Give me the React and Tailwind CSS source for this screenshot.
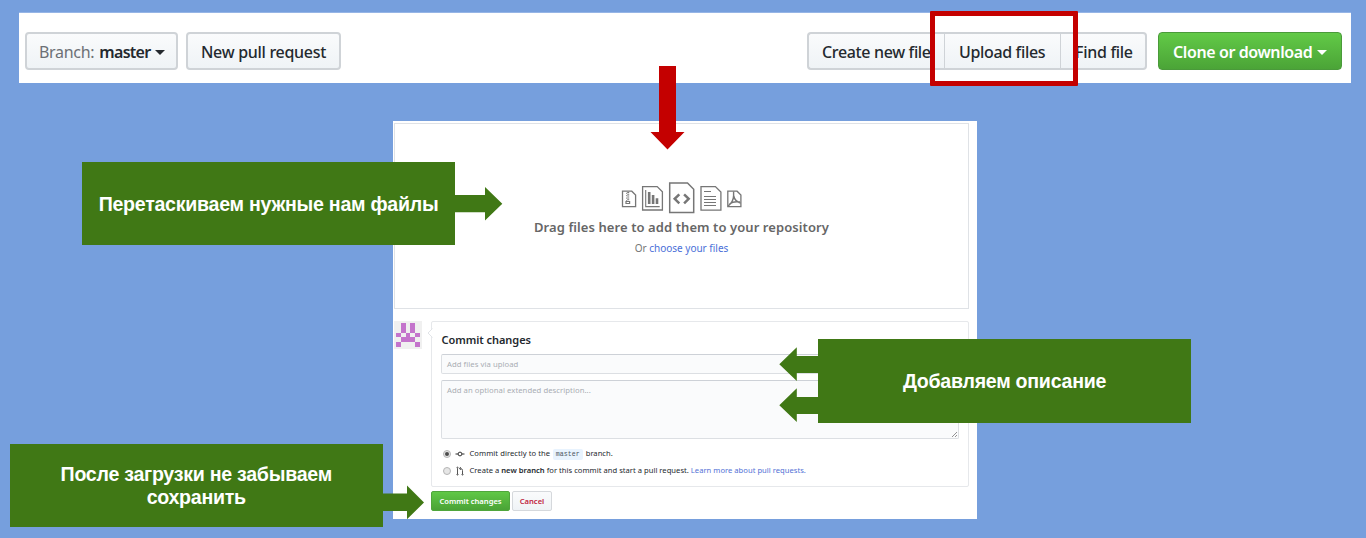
import React from "react";

const grayBtn =
  "flex items-center border border-[#cfd3d7] bg-gradient-to-b from-[#fafbfc] to-[#eff3f6] whitespace-nowrap";

function Toolbar() {
  return (
    <div className="ml-[19px] flex h-[70px] w-[1332px] shrink-0 items-center bg-white pt-[6px] pb-0 pl-[6px] pr-[9px] text-[16px] font-medium text-[#24292e] shadow-[0_-0.5px_0_#b5ccf0]">
      <div className={`${grayBtn} h-[38px] w-[153px] rounded-[4px] border-2 pt-[2px] pl-[12px]`}>
        <span className="font-normal tracking-[-0.3px] text-[#6c7075]">Branch:</span>
        <span className="ml-[5px] tracking-[-0.7px] font-semibold">master</span>
        <span className="ml-[4px] border-x-[5px] border-t-[5px] border-x-transparent border-t-[#24292e]" />
      </div>
      <div className={`${grayBtn} ml-[8px] h-[38px] w-[155px] rounded-[4px] border-2 pt-[2px] pl-[13px] tracking-[-0.3px]`}>
        New pull request
      </div>
      <div className="ml-auto flex">
        <div className={`${grayBtn} h-[38px] w-[137px] rounded-l-[4px] border-2 border-r-0 pt-[2px] pl-[13px] tracking-[-0.35px]`}>
          Create new file
        </div>
        <div className={`${grayBtn} h-[38px] w-[117px] border-y-2 pt-[2px] pl-[14px] tracking-[-0.35px]`}>
          Upload files
        </div>
        <div className={`${grayBtn} h-[38px] w-[86px] rounded-r-[4px] border-2 border-l-0 pt-[2px] pl-[14px] tracking-[-0.3px]`}>
          Find file
        </div>
      </div>
      <div className="ml-[11px] flex h-[38px] w-[184px] items-center rounded-[4px] border border-[#4a9a3a] bg-gradient-to-b from-[#62ca47] to-[#4ba437] pt-[2px] pl-[14px] whitespace-nowrap text-white">
        <span className="font-semibold tracking-[-0.4px]">Clone or download</span>
        <span className="ml-[5px] border-x-[5px] border-t-[5px] border-x-transparent border-t-white" />
      </div>
    </div>
  );
}

function FileIcons() {
  return (
    <svg className="h-[32px] w-[122px]" viewBox="621 182 122 32" fill="none" stroke="#767676" strokeWidth="1.3">
      <path d="M622.5 191.2h9.3l3.8 3.8v11.6h-13.1z" />
      <path d="M628.2 192v9" strokeWidth="2" strokeDasharray="1.2 1" />
      <path d="M626.6 192.8v8" strokeWidth="1" strokeDasharray="1 1.4" />
      <path d="M626 201.5h3.6v2h-3.6z" strokeWidth="1.2" />
      <path d="M642.6 186.6h14.6l5.2 5.2v18.2h-19.8z" />
      <path d="M645.7 190v16.6h14" strokeWidth="1.1" />
      <path d="M649.2 192v12M653.1 195v9M657 198.3v5.7" strokeWidth="2.6" />
      <path d="M669.7 183h17.8l6.2 6.2v23.4h-24z" strokeWidth="1.5" />
      <path d="M679.300 194.300l-4.600 4.500 4.600 4.500M684.100 194.300l4.600 4.500-4.600 4.500" strokeWidth="2.5" />
      <path d="M701 186.6h14.4l5.5 5.5v18H701z" />
      <path d="M704 191.5h7M704 196.5h12M704 199.5h12M704 202.5h12M704 205.5h12" strokeWidth="1.1" />
      <path d="M727.8 191.2h9.3l3.8 3.8v11.6h-13.1z" />
      <path d="M733.600 191.500v4c0 4-2.500 8-5.400 10.500M733.600 195.500c.8 3.800 3.200 6.600 7 7.600M729.500 204c2.800-2.200 6-2.800 10.500-2" strokeWidth="1.4" />
    </svg>
  );
}

function DropZone() {
  return (
    <div className="flex h-[186px] w-[575px] flex-col items-center border border-[#dfe2e6] whitespace-nowrap">
      <div className="mt-[58px] flex h-[32px]">
        <FileIcons />
      </div>
      <div className="mt-[3px] h-[20px] text-[13px] leading-[20px] font-semibold tracking-[0.08px] text-[#666666]">
        Drag files here to add them to your repository
      </div>
      <div className="mt-[4px] h-[15px] text-[10px] leading-[15px] text-[#767676]">
        Or <span className="text-[#4a6fd8]">choose your files</span>
      </div>
    </div>
  );
}

const cells = [1, 3, 6, 8, 10, 12, 14, 16, 17, 18, 20, 24];

function Avatar() {
  return (
    <div className="grid h-[28px] w-[28px] grid-cols-5 grid-rows-5 bg-[#f0f0f0] p-[2px]">
      {Array.from({ length: 25 }, (_, i) => (
        <span key={i} className={cells.includes(i) ? "bg-[#c474cc]" : ""} />
      ))}
    </div>
  );
}

function CommitForm() {
  return (
    <div className="mt-[12px] flex">
      <Avatar />
      <div className="relative ml-[9px] flex h-[166px] w-[538px] flex-col rounded-[2px] border border-[#e6e8eb] px-[9px] text-[#24292e]">
        <svg className="absolute top-[6px] -left-[5px] h-[10px] w-[6px]" viewBox="0 0 6 10" fill="white" stroke="#e1e4e8">
          <path d="M5.500 0.500L1 5l4.500 4.500" />
        </svg>
        <div className="mt-[9px] ml-[0.5px] h-[18px] text-[11px] leading-[18px] font-semibold tracking-[-0.05px]">Commit changes</div>
        <div className="mt-[5px] flex h-[20px] w-[518px] shrink-0 items-center rounded-[2px] border border-[#dcdfe3] border-t-[#cdd1d7] bg-[#fafbfc] pt-[1px] pl-[5px] text-[7.700px] tracking-[0.05px] text-[#a9adb3]">
          Add files via upload
        </div>
        <div className="mt-[6px] flex h-[59px] w-[518px] shrink-0 items-end justify-between rounded-[2px] border border-[#dcdfe3] border-t-[#cdd1d7] bg-[#fafbfc] pl-[5px] text-[7.700px] tracking-[0.05px] text-[#a9adb3]">
          <span className="self-start pt-[4px]">Add an optional extended description...</span>
          <svg className="h-[7px] w-[7px]" viewBox="0 0 7 7" stroke="#777" strokeWidth="0.8">
            <path d="M1 6L6 1M4 6L6 4" />
          </svg>
        </div>
        <div className="mt-[8px] flex h-[14px] items-center text-[7.600px]">
          <Radio checked />
          <svg className="ml-[4px] h-[8px] w-[10px]" viewBox="0 0 10 8" fill="none" stroke="#333" strokeWidth="1">
            <path d="M0.500 4h2.500M7 4h2.500" />
            <circle cx="5" cy="4" r="1.900" />
          </svg>
          <span className="ml-[4.500px] tracking-[0.06px]">Commit directly to the</span>
          <span className="mr-[3px] ml-[2.500px] flex h-[11px] w-[30px] items-center justify-center rounded-[2px] bg-[#e8f3fe] pt-[1px] font-['Liberation_Mono',monospace] text-[6.600px] text-[#4c5661]">
            master
          </span>
          <span>branch.</span>
        </div>
        <div className="mt-[3px] flex h-[14px] items-center text-[7.600px]">
          <Radio />
          <svg className="ml-[5px] h-[10px] w-[8px]" viewBox="0 0 8 10" fill="none" stroke="#444" strokeWidth="0.9">
            <path d="M1.500 2.500v5.500M6.500 8V4.500Q6.500 2.500 4.500 2.500h-.8M4.800 1L3.500 2.500l1.300 1.500" />
            <circle cx="1.500" cy="1.700" r="0.600" />
            <circle cx="1.500" cy="8.500" r="0.600" />
            <circle cx="6.500" cy="8.500" r="0.600" />
          </svg>
          <span className="ml-[5.500px] tracking-[0.02px] whitespace-pre">
            Create a <span className="font-semibold">new branch</span> for this commit and start a pull request.{" "}
            <span className="text-[#5271d6]">Learn more about pull requests.</span>
          </span>
        </div>
      </div>
    </div>
  );
}

function Radio({ checked }) {
  return (
    <span className="ml-[2px] flex h-[8px] w-[8px] items-center justify-center rounded-full border border-[#b5b5b5] bg-[#e6e6e6]">
      {checked && <span className="h-[4px] w-[4px] rounded-full bg-[#4c4c4c]" />}
    </span>
  );
}

function Arrow({ className, points, viewBox, fill = "#407815" }) {
  return (
    <svg className={`absolute ${className}`} viewBox={viewBox} fill={fill}>
      <polygon points={points} />
    </svg>
  );
}

const callout =
  "absolute flex items-center justify-center bg-[#407815] text-center font-['Liberation_Sans',Arial,sans-serif] text-[19.600px] leading-[23px] font-bold tracking-[-0.270px] whitespace-nowrap text-white";

export default function App() {
  return (
    <div className="relative flex h-[538px] w-[1366px] flex-col overflow-hidden bg-[#769fdd] pt-[13px] font-['Noto_Sans','Open_Sans',sans-serif]">
      <Toolbar />
      <div className="mt-[38px] ml-[393px] flex h-[398px] w-[584px] shrink-0 flex-col bg-white pt-[2px] pl-[1px]">
        <DropZone />
        <CommitForm />
        <div className="mt-[4px] ml-[37px] flex gap-[2px] text-[7.600px] whitespace-nowrap">
          <div className="flex h-[20px] w-[79px] items-center justify-center rounded-[2px] border border-[#4fa63c] bg-gradient-to-b from-[#60c846] to-[#4aa336] pt-[1px] font-semibold text-white">
            Commit changes
          </div>
          <div className="flex h-[20px] w-[40px] items-center justify-center rounded-[2px] border border-[#d5d8dc] bg-gradient-to-b from-[#fafbfc] to-[#eff3f6] pt-[1px] font-semibold text-[#c0233f]">
            Cancel
          </div>
        </div>
      </div>

      <div className="absolute top-[11px] left-[930px] h-[75px] w-[148px] rounded-[1px] border-[5px] border-[#c40000]" />
      <Arrow className="top-[66px] left-[650px] h-[84px] w-[35px]" viewBox="0 0 35 84" fill="#c40000" points="9,0 26,0 26,66 34.500,66 17.500,83.500 0.500,66 9,66" />

      <div className={`${callout} top-[162px] left-[82px] h-[83px] w-[373px] pt-[2px]`}>Перетаскиваем нужные нам файлы</div>
      <Arrow className="top-[187px] left-[454px] h-[34px] w-[49px]" viewBox="0 0 49 34" points="0,8 31,8 31,0 48.300,16.800 31,33.500 31,25.300 0,25.300" />

      <div className={`${callout} top-[339px] left-[818px] h-[84px] w-[373px]`}>Добавляем описание</div>
      <Arrow className="top-[347px] left-[779px] h-[34px] w-[40px]" viewBox="0 0 40 34" points="40,9 17.800,9 17.800,0.300 0.300,17.300 17.800,34 17.800,26 40,26" />
      <Arrow className="top-[388px] left-[779px] h-[34px] w-[40px]" viewBox="0 0 40 34" points="40,9 17.800,9 17.800,0.300 0.300,17.300 17.800,34 17.800,26 40,26" />

      <div className={`${callout} top-[443.500px] left-[9.500px] h-[83.500px] w-[373.500px] pt-[2px]`}>
        После загрузки не забываем
        <br />
        сохранить
      </div>
      <Arrow className="top-[485px] left-[382px] h-[35px] w-[43px]" viewBox="0 0 43 35" points="0,8.600 25,8.600 25,0.500 42,17.500 25,34.300 25,26 0,26" />
    </div>
  );
}
